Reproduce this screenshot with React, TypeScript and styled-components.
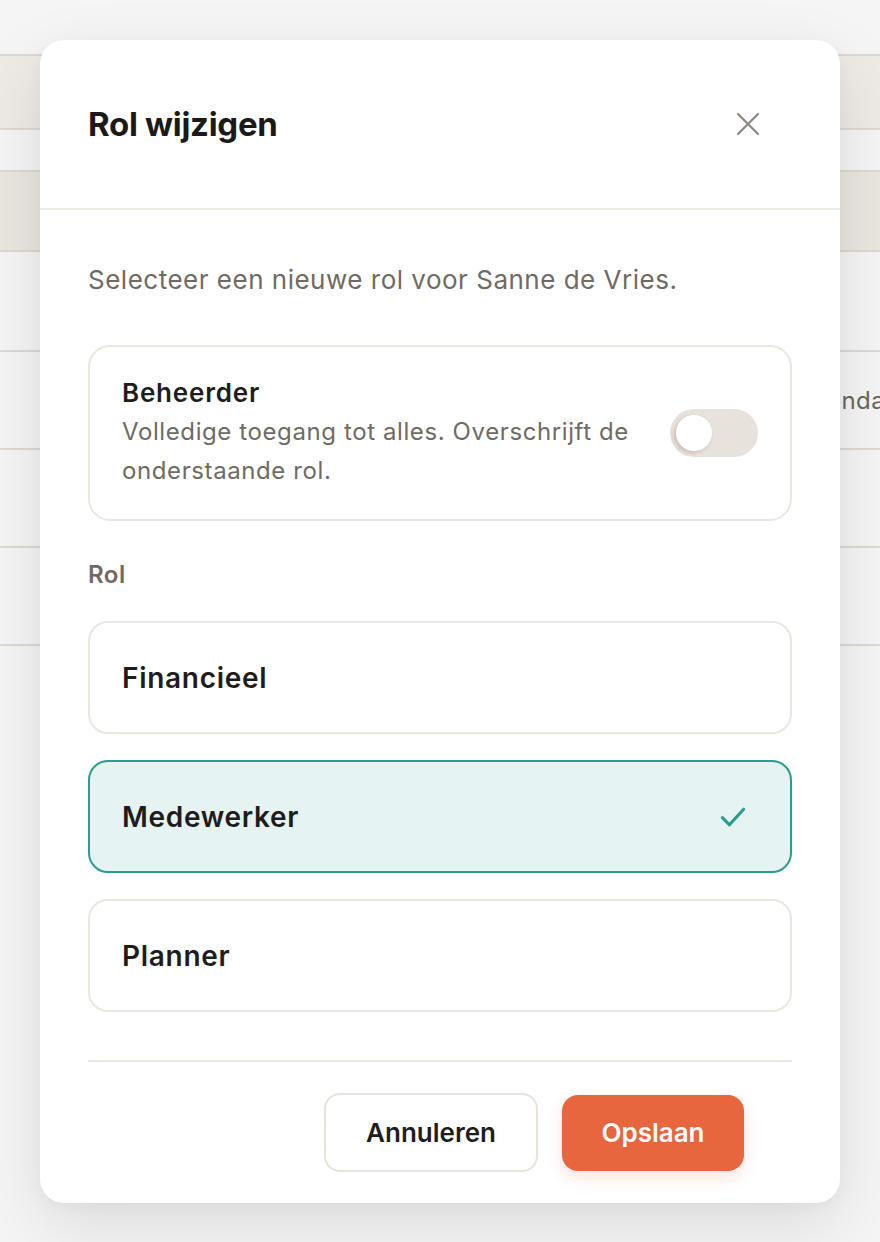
import React, { FC } from "react";
import styled, { createGlobalStyle } from "styled-components";

const GlobalStyle = createGlobalStyle`
  html, body {
    margin: 0;
    padding: 0;
    background: #ffffff;
  }
  * {
    box-sizing: border-box;
  }
  body {
    font-family: Inter, "Noto Sans", "Liberation Sans", sans-serif;
    -webkit-font-smoothing: antialiased;
  }
`;

interface Role {
  name: string;
}

const roles: Role[] = [
  { name: "Financieel" },
  { name: "Medewerker" },
  { name: "Planner" },
];

const App: FC = () => {
  const selected = "Medewerker";

  return (
    <Screen>
      <GlobalStyle />

      {/* page behind the dialog */}
      <Page>
        <TableRow $height={74} $tint="#f8f5f0" />
        <TableRow $height={42} />
        <TableRow $height={80} $tint="#f4f0ea" />
        <TableRow $height={100} />
        <TableRow $height={98}>
          <Cell>Agenda</Cell>
        </TableRow>
        <TableRow $height={98} />
        <TableRow $height={98} />
        <TableRow $height={98} />
      </Page>
      <Backdrop />

      <Dialog>
        <Header>
          <Title>Rol wijzigen</Title>
          <CloseButton aria-label="Sluiten">
            <svg width="32" height="32" viewBox="0 0 24 24" fill="none">
              <path
                d="M4.5 4.5 L19.5 19.5 M19.5 4.5 L4.5 19.5"
                stroke="#8c8782"
                strokeWidth="1.7"
                strokeLinecap="round"
              />
            </svg>
          </CloseButton>
        </Header>

        <Body>
          <Intro>Selecteer een nieuwe rol voor Sanne de Vries.</Intro>

          <AdminCard>
            <AdminText>
              <AdminTitle>Beheerder</AdminTitle>
              <AdminDesc>
                Volledige toegang tot alles. Overschrijft de onderstaande rol.
              </AdminDesc>
            </AdminText>
            <Toggle>
              <Knob />
            </Toggle>
          </AdminCard>

          <Label>Rol</Label>

          <OptionList>
            {roles.map((role) => (
              <Option key={role.name} $active={role.name === selected}>
                <span>{role.name}</span>
                {role.name === selected && (
                  <svg width="34" height="34" viewBox="0 0 24 24" fill="none">
                    <path
                      d="M4.5 12.5 L9.5 17.5 L19.5 6.5"
                      stroke="#2a9d8f"
                      strokeWidth="2.2"
                      strokeLinecap="round"
                      strokeLinejoin="round"
                    />
                  </svg>
                )}
              </Option>
            ))}
          </OptionList>

          <Footer>
            <SecondaryButton>Annuleren</SecondaryButton>
            <PrimaryButton>Opslaan</PrimaryButton>
          </Footer>
        </Body>
      </Dialog>
    </Screen>
  );
};

const Screen = styled.div`
  position: relative;
  width: 880px;
  height: 1242px;
  overflow: hidden;
  background: #ffffff;
`;

const Page = styled.div`
  padding-top: 54px;
`;

const TableRow = styled.div<{ $height: number; $tint?: string }>`
  height: ${(p) => p.$height}px;
  background: ${(p) => p.$tint || "#ffffff"};
  border-top: 2px solid #e6e1d9;
  display: flex;
  align-items: center;
  padding-left: 795px;
  overflow: hidden;
  white-space: nowrap;
`;

const Cell = styled.span`
  font-size: 24px;
  letter-spacing: 0.4px;
  color: #6f6a64;
`;

const Backdrop = styled.div`
  position: absolute;
  inset: 0;
  background: rgba(0, 0, 0, 0.04);
`;

const Dialog = styled.div`
  position: absolute;
  top: 40px;
  left: 40px;
  width: 800px;
  height: 1163px;
  background: #ffffff;
  border-radius: 24px;
  box-shadow: 0 24px 70px rgba(0, 0, 0, 0.1), 0 4px 16px rgba(0, 0, 0, 0.04);
  display: flex;
  flex-direction: column;
`;

const Header = styled.div`
  height: 170px;
  padding: 0 76px 0 48px;
  display: flex;
  align-items: center;
  justify-content: space-between;
  border-bottom: 2px solid #ece8e2;
`;

const Title = styled.h2`
  margin: 0;
  font-size: 33px;
  font-weight: 700;
  letter-spacing: -0.3px;
  color: #1c1a18;
`;

const CloseButton = styled.button`
  border: 0;
  background: none;
  padding: 0;
  display: flex;
  cursor: pointer;
`;

const Body = styled.div`
  padding: 52px 48px 0;
  display: flex;
  flex-direction: column;
`;

const Intro = styled.p`
  margin: 0;
  font-size: 26px;
  line-height: 36px;
  letter-spacing: 0.5px;
  color: #6f6a64;
`;

const AdminCard = styled.div`
  margin-top: 47px;
  height: 176px;
  border: 2px solid #ebe6df;
  border-radius: 22px;
  padding: 0 32px;
  display: flex;
  align-items: center;
  gap: 32px;
`;

const AdminText = styled.div`
  flex: 1;
`;

const AdminTitle = styled.div`
  font-size: 26px;
  line-height: 34px;
  font-weight: 600;
  letter-spacing: 0.8px;
  color: #1f1d1b;
`;

const AdminDesc = styled.div`
  margin-top: 2px;
  font-size: 24px;
  line-height: 39px;
  letter-spacing: 0.6px;
  color: #6f6a64;
  max-width: 530px;
`;

const Toggle = styled.div`
  width: 88px;
  height: 48px;
  border-radius: 24px;
  background: #e8e2dc;
  padding: 6px;
  flex-shrink: 0;
`;

const Knob = styled.div`
  width: 36px;
  height: 36px;
  border-radius: 50%;
  background: #ffffff;
  box-shadow: -2px 2px 4px rgba(60, 40, 20, 0.18);
`;

const Label = styled.div`
  margin-top: 40px;
  font-size: 24px;
  line-height: 28px;
  font-weight: 600;
  letter-spacing: 0.5px;
  color: #6f6a64;
`;

const OptionList = styled.div`
  margin-top: 32px;
  display: flex;
  flex-direction: column;
  gap: 26px;
`;

const Option = styled.div<{ $active?: boolean }>`
  height: 113px;
  border-radius: 20px;
  border: 2px solid ${(p) => (p.$active ? "#2a9d8f" : "#ebe6df")};
  background: ${(p) => (p.$active ? "#e5f3f2" : "#ffffff")};
  padding: 0 40px 0 32px;
  display: flex;
  align-items: center;
  justify-content: space-between;
  font-size: 28px;
  font-weight: 600;
  letter-spacing: 0.7px;
  color: #1f1d1b;
`;

const Footer = styled.div`
  margin-top: 48px;
  border-top: 2px solid #ece8e2;
  padding: 31px 48px 0 0;
  display: flex;
  justify-content: flex-end;
  align-items: center;
  gap: 24px;
`;

const SecondaryButton = styled.button`
  width: 214px;
  height: 79px;
  border-radius: 16px;
  border: 2px solid #e8e3dc;
  background: #ffffff;
  font-family: inherit;
  font-size: 26px;
  font-weight: 600;
  color: #1f1d1b;
  cursor: pointer;
`;

const PrimaryButton = styled.button`
  width: 182px;
  height: 76px;
  border-radius: 16px;
  border: 0;
  background: #e8663d;
  box-shadow: 0 6px 16px rgba(232, 102, 61, 0.18);
  font-family: inherit;
  font-size: 26px;
  font-weight: 600;
  color: #ffffff;
  cursor: pointer;
`;

export default App;
